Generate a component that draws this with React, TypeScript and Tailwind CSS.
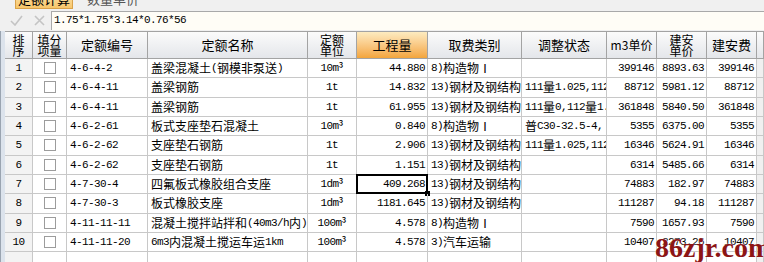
import type { ReactNode } from 'react'

const GRID = 'grid grid-cols-[28px_34px_81px_160px_49px_71px_94px_85px_50px_50px_50px_1fr]'

type Row = {
  no: number
  code: string
  name: string
  unit: string
  qty: string
  fee: string
  adjust: string
  m3: string
  price: string
  total: string
}

const ROWS: Row[] = [
  { no: 1, code: '4-6-4-2', name: '盖梁混凝土(钢模非泵送)', unit: '10m³', qty: '44.880', fee: '8)构造物Ⅰ', adjust: '', m3: '399146', price: '8893.63', total: '399146' },
  { no: 2, code: '4-6-4-11', name: '盖梁钢筋', unit: '1t', qty: '14.832', fee: '13)钢材及钢结构', adjust: '111量1.025,112量1.025', m3: '88712', price: '5981.12', total: '88712' },
  { no: 3, code: '4-6-4-11', name: '盖梁钢筋', unit: '1t', qty: '61.955', fee: '13)钢材及钢结构', adjust: '111量0,112量1.025', m3: '361848', price: '5840.50', total: '361848' },
  { no: 4, code: '4-6-2-61', name: '板式支座垫石混凝土', unit: '10m³', qty: '0.840', fee: '8)构造物Ⅰ', adjust: '普C30-32.5-4,', m3: '5355', price: '6375.00', total: '5355' },
  { no: 5, code: '4-6-2-62', name: '支座垫石钢筋', unit: '1t', qty: '2.906', fee: '13)钢材及钢结构', adjust: '111量1.025,112量1.025', m3: '16346', price: '5624.91', total: '16346' },
  { no: 6, code: '4-6-2-62', name: '支座垫石钢筋', unit: '1t', qty: '1.151', fee: '13)钢材及钢结构', adjust: '', m3: '6314', price: '5485.66', total: '6314' },
  { no: 7, code: '4-7-30-4', name: '四氟板式橡胶组合支座', unit: '1dm³', qty: '409.268', fee: '13)钢材及钢结构', adjust: '', m3: '74883', price: '182.97', total: '74883' },
  { no: 8, code: '4-7-30-3', name: '板式橡胶支座', unit: '1dm³', qty: '1181.645', fee: '13)钢材及钢结构', adjust: '', m3: '111287', price: '94.18', total: '111287' },
  { no: 9, code: '4-11-11-11', name: '混凝土搅拌站拌和(40m3/h内)', unit: '100m³', qty: '4.578', fee: '8)构造物Ⅰ', adjust: '', m3: '7590', price: '1657.93', total: '7590' },
  { no: 10, code: '4-11-11-20', name: '6m3内混凝土搅运车运1km', unit: '100m³', qty: '4.578', fee: '3)汽车运输', adjust: '', m3: '10407', price: '2273.26', total: '10407' },
]

// ascii runs get a narrow mono face, cjk stays 12px
function Txt({ text }: { text: string }) {
  const parts = text.split(/([\x20-\x7e]+)/).filter(Boolean)
  return (
    <>
      {parts.map((p, i) =>
        /^[\x20-\x7e]+$/.test(p) ? (
          <span key={i} className="font-['Liberation_Mono',monospace] text-[11px] tracking-[-0.6px]">{p}</span>
        ) : (
          <span key={i}>{p}</span>
        )
      )}
    </>
  )
}

function Cell({ children, align = 'left', className = '' }: { children?: ReactNode; align?: 'left' | 'center' | 'right'; className?: string }) {
  const a = align === 'right' ? 'justify-end pr-[2px]' : align === 'center' ? 'justify-center' : 'justify-start pl-[3px]'
  return (
    <div className={`flex items-center overflow-hidden whitespace-nowrap border-r border-b border-[#c8c8c8] ${a} ${className}`}>
      {children}
    </div>
  )
}

function Head({ children, className = '' }: { children: ReactNode; className?: string }) {
  return (
    <div className={`flex flex-col items-center justify-center overflow-hidden border-r border-b border-t border-[#a3a3a3] bg-gradient-to-b from-[#fbfbfb] to-[#e4e6ea] text-center ${className}`}>
      {children}
    </div>
  )
}

function Two({ a, b }: { a: string; b: string }) {
  return (
    <div className="flex flex-col items-center text-[12px] leading-[11px]">
      <span>{a}</span>
      <span>{b}</span>
    </div>
  )
}

export default function App() {
  return (
    <div className="relative w-[764px] h-[262px] overflow-hidden bg-[#f0f0f0] text-black font-['Noto_Sans_CJK_SC',sans-serif] text-[12px]">
      {/* tabs, cut off at the top */}
      <div className="flex h-[9px] items-end overflow-hidden gap-[14px] pl-[15px]">
        <div className="flex h-[20px] w-[58px] shrink-0 items-center justify-center border border-[#d9a24a] bg-gradient-to-b from-[#fde7b4] to-[#f7c66a] text-[13px]">
          定额计算
        </div>
        <div className="flex h-[20px] shrink-0 items-center text-[13px] text-[#555]">数量单价</div>
      </div>

      {/* formula bar */}
      <div className="flex h-[22px] items-center">
        <div className="flex w-[51px] items-center gap-[11px] pl-[10px]">
          <svg width="13" height="11" viewBox="0 0 13 11">
            <path d="M1 6 L5 10 L12 1" fill="none" stroke="#c4c4c4" strokeWidth="1.6" />
          </svg>
          <svg width="11" height="11" viewBox="0 0 11 11">
            <path d="M1 1 L10 10 M10 1 L1 10" fill="none" stroke="#c4c4c4" strokeWidth="1.6" />
          </svg>
        </div>
        <div className="flex h-[19px] flex-1 items-center border-t border-l border-[#a9a9a9] bg-[#fffdf6] pl-[2px]">
          <span className="font-['Liberation_Mono',monospace] text-[11px] tracking-[-0.6px]">1.75*1.75*3.14*0.76*56</span>
        </div>
      </div>

      {/* grid */}
      <div className="flex">
        <div className="w-[5px] shrink-0 border-l border-[#9aa4b0] bg-[#dce3ec]" />
        <div className="flex-1">
          <div className={`${GRID} h-[28px] text-[13px]`}>
            <Head><Two a="排" b="序" /></Head>
            <Head><Two a="填分" b="项量" /></Head>
            <Head>定额编号</Head>
            <Head>定额名称</Head>
            <Head><Two a="定额" b="单位" /></Head>
            <Head className="!from-[#fdebc0] !to-[#f3a53a]">工程量</Head>
            <Head>取费类别</Head>
            <Head>调整状态</Head>
            <Head><span className="text-[12px]">m3单价</span></Head>
            <Head><Two a="建安" b="单价" /></Head>
            <Head>建安费</Head>
            <Head>{''}</Head>
          </div>

          {ROWS.map(r => (
            <div key={r.no} className={`${GRID} h-[19.33px] bg-white`}>
              <Cell align="center" className="bg-[#f3f3f3]"><Txt text={String(r.no)} /></Cell>
              <Cell align="center">
                <span className="block h-[12px] w-[12px] border border-[#9c9c9c] bg-white" />
              </Cell>
              <Cell><Txt text={r.code} /></Cell>
              <Cell><Txt text={r.name} /></Cell>
              <Cell align="center"><Txt text={r.unit} /></Cell>
              <Cell align="right" className="relative !overflow-visible">
                <Txt text={r.qty} />
                {r.no === 7 && (
                  <>
                    <span className="absolute -inset-[1px] border-2 border-black" />
                    <span className="absolute -right-[3px] -bottom-[3px] h-[5px] w-[5px] bg-black" />
                  </>
                )}
              </Cell>
              <Cell><Txt text={r.fee} /></Cell>
              <Cell><Txt text={r.adjust} /></Cell>
              <Cell align="right"><Txt text={r.m3} /></Cell>
              <Cell align="right"><Txt text={r.price} /></Cell>
              <Cell align="right"><Txt text={r.total} /></Cell>
              <Cell className="bg-[#f0f0f0]" />
            </div>
          ))}
          <div className={`${GRID} h-[20px] bg-white`}>
            <Cell className="bg-[#f3f3f3]" />
            <Cell /><Cell /><Cell /><Cell /><Cell /><Cell /><Cell /><Cell /><Cell /><Cell />
            <Cell className="bg-[#f0f0f0]" />
          </div>
        </div>
      </div>

      {/* watermark */}
      <div className="absolute left-[655px] top-[234px] font-['Liberation_Serif',serif] text-[28px] font-bold leading-none text-[#8c1515] [text-shadow:0_0_2px_#fff]">
        86zjr.com
      </div>
    </div>
  )
}
